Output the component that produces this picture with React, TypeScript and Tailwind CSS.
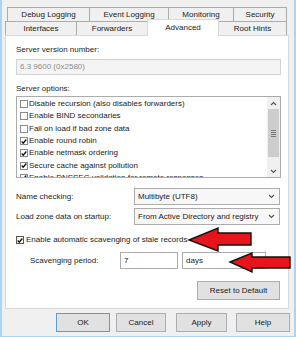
import React from 'react';

const TOP_TABS = [
  { label: 'Debug Logging', w: 'w-[82px]' },
  { label: 'Event Logging', w: 'w-[79px]' },
  { label: 'Monitoring', w: 'w-[65px]' },
  { label: 'Security', w: 'w-[54px]' },
];

const OPTIONS = [
  { label: 'Disable recursion (also disables forwarders)', checked: false },
  { label: 'Enable BIND secondaries', checked: false },
  { label: 'Fail on load if bad zone data', checked: false },
  { label: 'Enable round robin', checked: true },
  { label: 'Enable netmask ordering', checked: true },
  { label: 'Secure cache against pollution', checked: true },
  { label: 'Enable DNSSEC validation for remote responses', checked: true },
];

function Check({ checked, boxed }: { checked: boolean; boxed?: boolean }) {
  return (
    <span
      className={`flex h-[8px] w-[8px] shrink-0 items-center justify-center bg-white ${
        boxed ? 'border border-[#555]' : 'border border-[#8a8a8a]'
      }`}
    >
      {checked && (
        <svg width="7" height="7" viewBox="0 0 7 7">
          <path d="M0.8 3.6 L2.6 5.4 L6.2 1.2" fill="none" stroke="#111" strokeWidth="1.6" />
        </svg>
      )}
    </span>
  );
}

function Chevron({ up }: { up?: boolean }) {
  return (
    <svg width="7" height="5" viewBox="0 0 7 5">
      <path
        d={up ? 'M1 4 L3.5 1.5 L6 4' : 'M1 1 L3.5 3.5 L6 1'}
        fill="none"
        stroke="#555"
        strokeWidth="1.1"
      />
    </svg>
  );
}

function Select({ value }: { value: string }) {
  return (
    <div className="flex h-[17px] w-[146px] items-center justify-between border border-[#acacac] bg-[#f7f7f7] pl-[3px] pr-[4px]">
      <span>{value}</span>
      <Chevron />
    </div>
  );
}

function Button({ label, w, primary }: { label: string; w: string; primary?: boolean }) {
  return (
    <div
      className={`flex h-[19px] items-center justify-center bg-[#e1e1e1] ${w} ${
        primary ? 'border border-[#5b9bd0]' : 'border border-[#adadad]'
      }`}
    >
      {label}
    </div>
  );
}

export default function App() {
  return (
    <div className="relative h-[337px] w-[296px] overflow-hidden border-x-2 border-b-[1px] border-[#a9d4f2] bg-[#f0f0f0] font-['Liberation_Sans',Arial,sans-serif] text-[8px] leading-[10px] text-[#1b1b1b]">
      {/* tab strip */}
      <div className="pt-[7px]">
        <div className="ml-[5px] flex h-[14px]">
          {TOP_TABS.map((t) => (
            <div
              key={t.label}
              className={`flex items-center justify-center border border-b-0 border-r-0 border-[#acacac] bg-[#f0f0f0] last:border-r ${t.w}`}
            >
              {t.label}
            </div>
          ))}
        </div>
        <div className="ml-[3px] flex h-[14px] items-end">
          <div className="flex h-[14px] w-[71px] items-center justify-center border border-b-0 border-r-0 border-[#acacac]">
            Interfaces
          </div>
          <div className="flex h-[14px] w-[71px] items-center justify-center border border-b-0 border-r-0 border-[#acacac]">
            Forwarders
          </div>
          <div className="relative z-10 -mb-[1px] flex h-[17px] w-[72px] items-start justify-center border border-b-0 border-[#d9d9d9] bg-white pt-[3px]">
            Advanced
          </div>
          <div className="flex h-[14px] w-[68px] items-center justify-center border border-b-0 border-l-0 border-[#acacac]">
            Root Hints
          </div>
        </div>
      </div>

      {/* tab page */}
      <div className="ml-[3px] flex h-[274px] w-[284px] flex-col border border-[#d9d9d9] bg-white pl-[10px] pr-[7px]">
        <div className="mt-[9px] h-[10px]">Server version number:</div>
        <div className="mt-[4px] flex h-[16px] w-[265px] items-center border border-[#d3d3d3] bg-[#f4f4f4] pl-[3px] text-[#8c8c8c]">
          6.3 9600 (0x2580)
        </div>

        <div className="mt-[9px] h-[10px]">Server options:</div>
        <div className="mt-[2px] flex h-[82px] w-[265px] overflow-hidden border border-[#acacac]">
          <div className="flex flex-1 flex-col pl-[3px] pt-[1px]">
            {OPTIONS.map((o) => (
              <div key={o.label} className="flex h-[12.3px] shrink-0 items-center gap-[1px] whitespace-nowrap">
                <Check checked={o.checked} />
                <span>{o.label}</span>
              </div>
            ))}
          </div>
          <div className="flex w-[13px] flex-col bg-[#f0f0f0]">
            <div className="flex h-[12px] items-center justify-center">
              <Chevron up />
            </div>
            <div className="mx-[1px] flex h-[48px] flex-col items-center justify-center gap-[1px] bg-[#cdcdcd]">
              <span className="h-[1px] w-[5px] bg-[#777]" />
              <span className="h-[1px] w-[5px] bg-[#777]" />
              <span className="h-[1px] w-[5px] bg-[#777]" />
              <span className="h-[1px] w-[5px] bg-[#777]" />
            </div>
            <div className="flex-1" />
            <div className="flex h-[12px] items-center justify-center">
              <Chevron />
            </div>
          </div>
        </div>

        <div className="mt-[10px] flex items-center">
          <span className="w-[118px]">Name checking:</span>
          <Select value="Multibyte (UTF8)" />
        </div>
        <div className="mt-[3px] flex items-center">
          <span className="w-[118px]">Load zone data on startup:</span>
          <Select value="From Active Directory and registry" />
        </div>

        <div className="mt-[9px] flex h-[12px] items-center gap-[2px]">
          <Check checked boxed />
          <span>Enable automatic scavenging of stale records</span>
        </div>

        <div className="mt-[6px] flex items-center">
          <span className="w-[104px] pl-[14px]">Scavenging period:</span>
          <div className="flex h-[17px] w-[58px] items-center border border-[#acacac] pl-[3px]">7</div>
          <div className="ml-[4px] flex h-[17px] w-[84px] items-center border border-[#acacac] pl-[3px]">
            days
          </div>
        </div>

        <div className="mt-[12px] flex justify-end pr-[1px]">
          <Button label="Reset to Default" w="w-[83px] h-[16px]" />
        </div>
      </div>

      {/* dialog buttons */}
      <div className="mt-[4px] flex">
        <div className="ml-[54px]">
          <Button label="OK" w="w-[54px]" primary />
        </div>
        <div className="ml-[6px]">
          <Button label="Cancel" w="w-[50px]" />
        </div>
        <div className="ml-[10px]">
          <Button label="Apply" w="w-[51px]" />
        </div>
        <div className="ml-[9px]">
          <Button label="Help" w="w-[54px]" />
        </div>
      </div>

      {/* red annotation arrows */}
      <svg
        className="pointer-events-none absolute left-[-2px] top-0"
        width="296"
        height="337"
        viewBox="0 0 296 337"
      >
        <polygon
          points="189,240 218,228 218,233 251,233 251,245 218,245 218,251"
          fill="#e8141c"
          stroke="#111"
          strokeWidth="1.4"
          strokeLinejoin="miter"
        />
        <polygon
          points="230,262 252,253 252,257 290,257 290,268 252,268 252,272"
          fill="#e8141c"
          stroke="#111"
          strokeWidth="1.4"
          strokeLinejoin="miter"
        />
      </svg>
    </div>
  );
}
